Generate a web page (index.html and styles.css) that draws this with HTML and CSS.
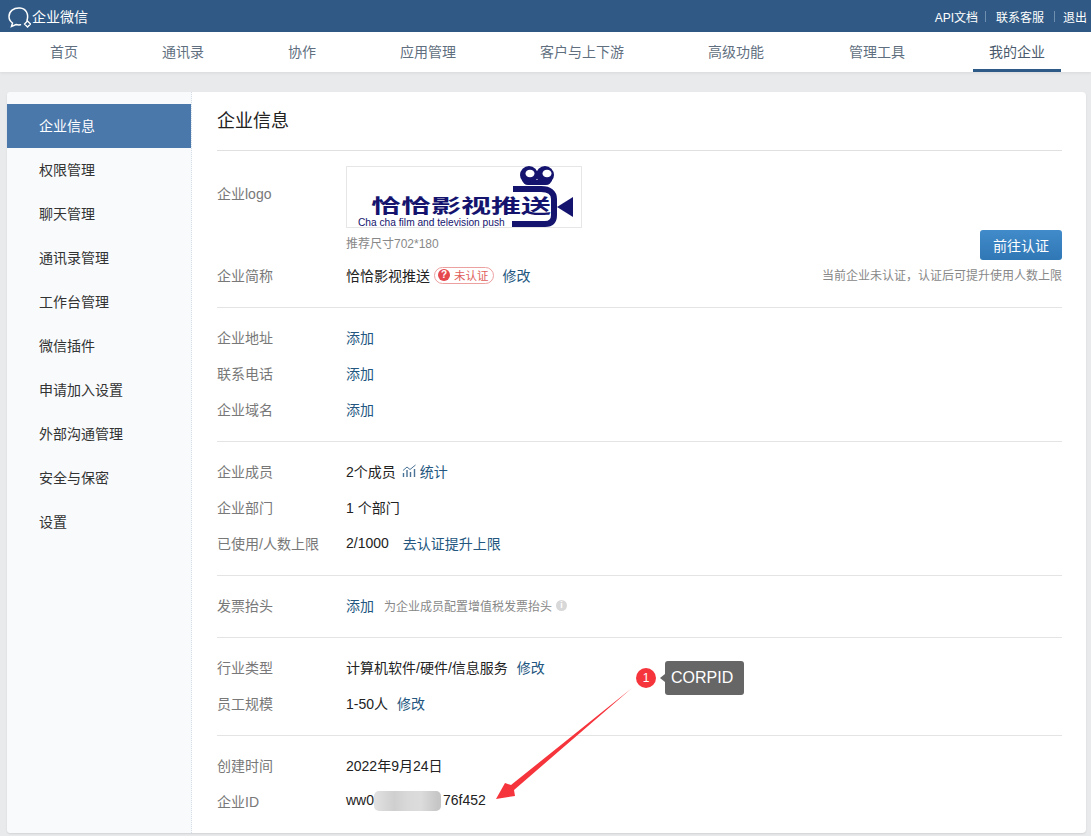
FILE: index.html
```html
<!DOCTYPE html>
<html>
<head>
    <meta charset="utf-8">
    <title>企业信息</title>
    <link rel="stylesheet" href="styles.css">
</head>
<body>
    <header class="topbar">
        <div class="brand">
            <svg class="brand-icon" width="24" height="26" viewBox="0 0 24 26">
                <path d="M20 17.500C22 11 19 5.500 13 5 6.500 4.500 2 8.500 2 13.500c0 3 1.500 5 3.500 6.500L4.500 23.500l4.500-2c1.500.5 3 .5 4.500.3" fill="none" stroke="#fff" stroke-width="1.500" stroke-linecap="round"/>
                <path d="M20.500 18l3 3-3 3-3-3z" fill="none" stroke="#fff" stroke-width="1.300"/>
            </svg>
            <span>企业微信</span>
        </div>
        <div class="toplinks">
            <a>API文档</a><i></i><a>联系客服</a><i></i><a>退出</a>
        </div>
    </header>
    <nav class="mainnav">
        <a>首页</a>
        <a>通讯录</a>
        <a>协作</a>
        <a>应用管理</a>
        <a>客户与上下游</a>
        <a>高级功能</a>
        <a class="shifted">管理工具</a>
        <a class="current">我的企业</a>
    </nav>

    <div class="card">
        <aside class="sidebar">
            <a class="active">企业信息</a>
            <a>权限管理</a>
            <a>聊天管理</a>
            <a>通讯录管理</a>
            <a>工作台管理</a>
            <a>微信插件</a>
            <a>申请加入设置</a>
            <a>外部沟通管理</a>
            <a>安全与保密</a>
            <a>设置</a>
        </aside>
        <main class="content">
            <h1>企业信息</h1>

            <section class="group group-first">
                <div class="group-left">
                    <div class="logo-row">
                        <span class="label logo-label">企业logo</span>
                        <div>
                            <svg class="logo" width="236" height="62" viewBox="0 0 236 62">
                                <rect x=".5" y=".5" width="235" height="61" fill="#fff" stroke="#e6e6e6"/>
                                <text transform="translate(25 47) scale(1.58 1)" class="logo-title">恰恰影视推送</text>
                                <text x="12" y="60" class="logo-sub">Cha cha film and television push</text>
                                <circle cx="183" cy="9" r="9" fill="#14146e"/>
                                <circle cx="199" cy="9" r="9" fill="#14146e"/>
                                <path d="M176 14h30c-1 3-3 5-6 5h-18c-3 0-5-2-6-5z" fill="#14146e"/>
                                <ellipse cx="184" cy="7.500" rx="4.500" ry="3.800" fill="#fff"/>
                                <ellipse cx="201" cy="7.500" rx="4.500" ry="3.800" fill="#fff"/>
                                <path d="M167 23h28c9 0 13 4 13 10v16c0 6-3 9-9 9h-33" fill="none" stroke="#14146e" stroke-width="6"/>
                                <path d="M211 41l16-10v20z" fill="#14146e"/>
                            </svg>
                            <div class="logo-hint">推荐尺寸702*180</div>
                        </div>
                    </div>
                    <div class="row">
                        <span class="label">企业简称</span>
                        <span class="value">恰恰影视推送</span>
                        <span class="badge"><b>?</b>未认证</span>
                        <a class="link edit-after-badge">修改</a>
                    </div>
                </div>
                <div class="verify">
                    <button class="verify-btn">前往认证</button>
                    <div class="verify-note">当前企业未认证，认证后可提升使用人数上限</div>
                </div>
            </section>

            <section class="group">
                <div class="row"><span class="label">企业地址</span><a class="link">添加</a></div>
                <div class="row"><span class="label">联系电话</span><a class="link">添加</a></div>
                <div class="row"><span class="label">企业域名</span><a class="link">添加</a></div>
            </section>

            <section class="group">
                <div class="row">
                    <span class="label">企业成员</span>
                    <span class="value">2个成员</span>
                    <svg class="stat-icon" width="15" height="14" viewBox="0 0 15 14">
                        <path d="M1 6.500L5 3l3 2.500L13.500 1" fill="none" stroke="#4a7296" stroke-width="1"/>
                        <path d="M1.500 13V9M5 13V6M8.500 13V8M12.500 13V5" fill="none" stroke="#4a7296" stroke-width="1.400"/>
                    </svg>
                    <a class="link">统计</a>
                </div>
                <div class="row"><span class="label">企业部门</span><span class="value">1 个部门</span></div>
                <div class="row">
                    <span class="label">已使用/人数上限</span>
                    <span class="value">2/1000</span>
                    <a class="link raise-link">去认证提升上限</a>
                </div>
            </section>

            <section class="group">
                <div class="row">
                    <span class="label">发票抬头</span>
                    <a class="link">添加</a>
                    <span class="tip">为企业成员配置增值税发票抬头</span>
                    <span class="info">i</span>
                </div>
            </section>

            <section class="group">
                <div class="row">
                    <span class="label">行业类型</span>
                    <span class="value">计算机软件/硬件/信息服务</span>
                    <a class="link edit-after-value">修改</a>
                </div>
                <div class="row">
                    <span class="label">员工规模</span>
                    <span class="value">1-50人</span>
                    <a class="link edit-after-size">修改</a>
                </div>
            </section>

            <section class="group group-last">
                <div class="row"><span class="label">创建时间</span><span class="value">2022年9月24日</span></div>
                <div class="row"><span class="label">企业ID</span><span class="value">ww0<span class="masked"></span>76f452</span></div>
            </section>
        </main>
    </div>

    <!-- annotation drawn over the screenshot -->
    <div class="mark">1</div>
    <div class="mark-tip">CORPID</div>
    <svg class="mark-arrow" width="150" height="125" viewBox="0 0 150 125">
        <path d="M142 1L24 103 25 109 6 112 15 96 21 98z" fill="#f6343c"/>
    </svg>
</body>
</html>
```

FILE: styles.css
```css
html, body {
    height: 100%;
}
body {
    position: relative;
    margin: 0;
    overflow: hidden;
    background: #e9eaec;
    color: #222;
    font-family: "Liberation Sans", "Noto Sans CJK SC", sans-serif;
    font-size: 14px;
}
a {
    cursor: pointer;
}

/* top bar */
.topbar {
    display: flex;
    justify-content: space-between;
    align-items: center;
    height: 32px;
    padding: 0 4px 0 7px;
    background: #305a85;
    color: #fff;
}
.brand {
    display: flex;
    align-items: center;
    gap: 1px;
    font-size: 14px;
}
.toplinks {
    display: flex;
    align-items: center;
    font-size: 12px;
}
.toplinks i {
    width: 1px;
    height: 11px;
    margin: 0 10px 0 7px;
    background: #6f8fae;
}
.toplinks i:last-of-type {
    margin: 0 8px 0 10px;
}

/* main nav */
.mainnav {
    display: flex;
    gap: 52px;
    height: 40px;
    padding-left: 34px;
    background: #fff;
    box-shadow: 0 1px 3px rgba(0, 0, 0, 0.08);
}
.mainnav a {
    padding: 0 16px;
    color: #5f6f80;
    line-height: 40px;
}
.mainnav .shifted {
    margin-left: 1px;
}
.mainnav .current {
    border-bottom: 3px solid #2d5a86;
    height: 37px;
    color: #4a5a6c;
}

/* card */
.card {
    display: flex;
    width: 1079px;
    height: 741px;
    margin: 20px 0 0 7px;
    background: #fff;
    border-radius: 4px;
    overflow: hidden;
    box-shadow: 0 1px 2px rgba(0, 0, 0, 0.1);
}
.sidebar {
    flex: none;
    width: 184px;
    padding-top: 12px;
    background: #f8fafc;
    border-right: 1px dotted #d5dde6;
}
.sidebar a {
    display: block;
    height: 44px;
    padding-left: 32px;
    line-height: 44px;
    color: #333;
}
.sidebar .active {
    background: #4a78ab;
    color: #fff;
}
.content {
    flex: 1;
    padding: 0 24px 0 25px;
}
.content h1 {
    margin: 0;
    height: 58px;
    border-bottom: 1px solid #e0e0e0;
    font-size: 18px;
    font-weight: normal;
    line-height: 59px;
    color: #222;
}

/* info groups */
.group {
    padding: 11px 0 14px;
    border-bottom: 1px solid #e4e4e4;
}
.group-first {
    display: flex;
    justify-content: space-between;
    align-items: flex-end;
    padding-top: 15px;
}
.group-last {
    border-bottom: none;
}
.row {
    display: flex;
    align-items: center;
    height: 36px;
}
.label {
    flex: none;
    width: 129px;
    color: #787878;
}
.value {
    color: #222;
}
.link {
    color: #23577f;
}
.logo-row {
    display: flex;
    height: 91px;
}
.logo-label {
    margin-top: 17px;
}
.logo {
    display: block;
}
.logo-title {
    fill: #14146e;
    font-size: 19px;
    font-weight: bold;
}
.logo-sub {
    fill: #14146e;
    font-size: 10.200px;
}
.logo-hint {
    margin-top: 6px;
    color: #888;
    font-size: 12px;
}
.badge {
    display: flex;
    align-items: center;
    gap: 4px;
    height: 15px;
    margin-left: 4px;
    padding: 0 4px 0 3px;
    border: 1px solid #eda0a0;
    border-radius: 9px;
    color: #e0605c;
    font-size: 11.500px;
}
.badge b {
    width: 12px;
    height: 12px;
    border-radius: 50%;
    background: #e5484d;
    color: #fff;
    font-size: 10px;
    line-height: 12px;
    text-align: center;
}
.edit-after-badge {
    margin-left: 9px;
}
.edit-after-value {
    margin-left: 9px;
}
.edit-after-size {
    margin-left: 9px;
}
.raise-link {
    margin-left: 14px;
}
.stat-icon {
    margin: 0 3px 0 6px;
}
.tip {
    margin-left: 10px;
    color: #888;
    font-size: 12px;
}
.info {
    width: 11px;
    height: 11px;
    margin-left: 4px;
    border-radius: 50%;
    background: #d8d8d8;
    color: #fff;
    font-size: 9px;
    font-weight: bold;
    line-height: 11px;
    text-align: center;
}
.verify {
    display: flex;
    flex-direction: column;
    align-items: flex-end;
}
.verify-btn {
    width: 82px;
    height: 30px;
    padding: 0;
    border: none;
    border-radius: 3px;
    background: linear-gradient(#428bca, #2f77b5);
    color: #fff;
    font-family: inherit;
    font-size: 14px;
}
.verify-note {
    color: #888;
    font-size: 12px;
    line-height: 33px;
}
.masked {
    display: inline-block;
    width: 67px;
    height: 20px;
    margin: 0 2px 0 0;
    vertical-align: middle;
    border-radius: 5px;
    background: linear-gradient(90deg, #e2e2e2, #cfcfcf 30%, #d9d9d9 50%, #dcdcdc 70%, #c6c6c6 95%);
}

/* annotation */
.mark {
    position: absolute;
    left: 636px;
    top: 668px;
    width: 20px;
    height: 20px;
    border-radius: 50%;
    background: #f6343c;
    color: #fff;
    font-size: 12px;
    line-height: 20px;
    text-align: center;
}
.mark-tip {
    position: absolute;
    left: 665px;
    top: 661px;
    width: 73px;
    height: 34px;
    padding-left: 6px;
    border-radius: 3px;
    background: #666;
    color: #fff;
    font-size: 16px;
    line-height: 34px;
}
.mark-tip::before {
    content: "";
    position: absolute;
    left: -5px;
    top: 13px;
    border-style: solid;
    border-width: 4px 5px 4px 0;
    border-color: transparent #666 transparent transparent;
}
.mark-arrow {
    position: absolute;
    left: 490px;
    top: 687px;
}
```
